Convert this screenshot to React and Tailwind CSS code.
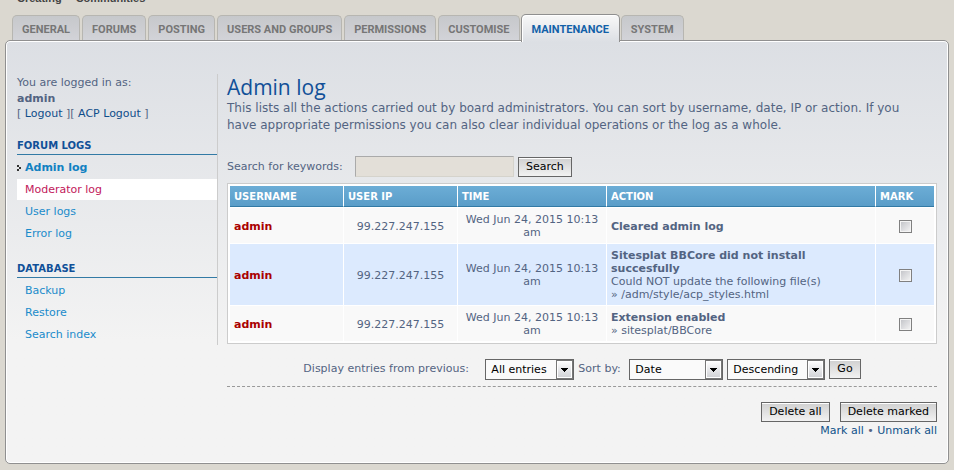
import React from 'react';

const tabs = ['General', 'Forums', 'Posting', 'Users and groups', 'Permissions', 'Customise', 'Maintenance', 'System'];

const menu = [
  { title: 'Forum logs', items: ['Admin log', 'Moderator log', 'User logs', 'Error log'] },
  { title: 'Database', items: ['Backup', 'Restore', 'Search index'] },
];

const entries = [
  { title: 'Cleared admin log', lines: [] },
  {
    title: 'Sitesplat BBCore did not install succesfully',
    lines: ['Could NOT update the following file(s)', '» /adm/style/acp_styles.html'],
  },
  { title: 'Extension enabled', lines: ['» sitesplat/BBCore'] },
];

function Tab({ label, active }) {
  return (
    <li className="flex">
      <a
        href="#tab"
        className={
          active
            ? 'relative -mx-px -mb-[2px] h-[28px] rounded-t-[5px] border border-b-0 border-[#8f8f8f] bg-linear-to-b from-[#f8f8f8] to-[#dcdfe4] px-[10px] pt-[6px] text-[#1261a8] shadow-[inset_1px_1px_0_#fff]'
            : 'h-[25px] rounded-t-[5px] border border-b-0 border-[#b7b6b1] bg-linear-to-b from-[#c6c8cb] to-[#d2d3d8] px-[9px] pt-[5px] text-[#767676]'
        }
      >
        {label}
      </a>
    </li>
  );
}

function Button({ children }) {
  return (
    <button
      type="button"
      className="h-5 border border-[#666] bg-linear-to-b from-[#d0d0d0] to-[#f2f2f2] px-[7px] text-[11px] leading-[18px] text-black shadow-[inset_0_1px_0_#fff]"
    >
      {children}
    </button>
  );
}

function Select({ label, options, width }) {
  return (
    <span className={`relative inline-block ${width}`}>
      <select
        aria-label={label}
        className="block h-[21px] w-full appearance-none border border-[#666] bg-[#fafafa] pl-[5px] text-[11px] leading-[19px] text-black"
      >
        {options.map((o) => (
          <option key={o}>{o}</option>
        ))}
      </select>
      <span className="pointer-events-none absolute top-px right-px flex h-[19px] w-[17px] items-center justify-center border border-[#777] bg-linear-to-b from-white to-[#d0d1d5] shadow-[inset_0_0_0_1px_#fff]">
        <svg width="7" height="4" viewBox="0 0 7 4" shapeRendering="crispEdges" aria-hidden="true">
          <path d="M0 0h7v1H6v1H5v1H4v1H3V3H2V2H1V1H0z" fill="#000" />
        </svg>
      </span>
    </span>
  );
}

function MenuItem({ label }) {
  const base = 'flex h-[21px] items-center ';
  if (label === 'Admin log') {
    return (
      <a href="#log" className={base + 'font-bold text-[#1181c2]'}>
        <svg className="mr-1" width="4" height="6" viewBox="0 0 4 6" shapeRendering="crispEdges" aria-hidden="true">
          <path d="M0 0h2v2H0zM2 2h2v2H2zM0 4h2v2H0z" fill="#333" />
        </svg>
        {label}
      </a>
    );
  }
  if (label === 'Moderator log') {
    return (
      <a href="#log" className={base + 'bg-white pl-2 text-[#c2185b]'}>
        {label}
      </a>
    );
  }
  return (
    <a href="#log" className={base + 'pl-2 text-[#1a8bcb]'}>
      {label}
    </a>
  );
}

export default function App() {
  return (
    <div className="bg-[#dbd8d0] pr-[5px] pb-[6px] pl-[5px] font-['Verdana','DejaVu_Sans',sans-serif] text-[11px] leading-[13px] text-[#536482]">
      <header className="flex h-[15px] flex-col justify-start overflow-hidden pl-3">
        <p className="-mt-[9px] flex gap-3.5 font-['Liberation_Sans',sans-serif] text-[11px] leading-[14px] font-bold text-[#444]">
          <span>Creating</span>
          <span>Communities</span>
        </p>
      </header>

      <nav aria-label="Sections" className="h-[25px]">
        <ul className="flex h-[25px] items-end gap-[2px] pl-[7px] font-[Roboto,sans-serif] text-[11px] leading-[17px] font-bold uppercase">
          {tabs.map((t) => (
            <Tab key={t} label={t} active={t === 'Maintenance'} />
          ))}
        </ul>
      </nav>

      <div className="flex rounded-[5px] border border-[#909090] bg-[#f3f3f3] bg-linear-to-b from-[#dcdfe4] to-[#f3f3f3] to-[300px] px-[11px] pt-[33px] pb-[26px] shadow-[inset_0_0_0_1px_#fff]">
        <aside className="w-[201px] shrink-0 self-start border-r border-[#ccc] pt-px">
          <p className="leading-4">You are logged in as:</p>
          <p className="leading-4 font-bold">admin</p>
          <p className="leading-[14px]">
            [ <a href="#logout" className="text-[#0f4d8a]">Logout</a> ][{' '}
            <a href="#acp" className="text-[#0f4d8a]">ACP Logout</a> ]
          </p>
          <div className="flex flex-col gap-[17px] pt-[17px]">
            {menu.map((group) => (
              <section key={group.title}>
                <h2 className="border-b border-[#327aa5] text-[10px] leading-4 font-bold text-[#115098] uppercase">
                  {group.title}
                </h2>
                <ul className="flex flex-col gap-px pt-[2px]">
                  {group.items.map((i) => (
                    <li key={i}>
                      <MenuItem label={i} />
                    </li>
                  ))}
                </ul>
              </section>
            ))}
          </div>
        </aside>

        <main className="min-w-0 flex-1 pl-[9px]">
          <h1 className="font-['Trebuchet_MS','Open_Sans',sans-serif] text-[21px] leading-[26px] font-medium text-[#115098]">
            Admin log
          </h1>
          <p className="pr-3 text-[12px] leading-[17px]">
            This lists all the actions carried out by board administrators. You can sort by username, date, IP or action. If
            you have appropriate permissions you can also clear individual operations or the log as a whole.
          </p>

          <div className="flex items-center pt-[22px]">
            <label htmlFor="keywords" className="w-32">Search for keywords:</label>
            <input
              id="keywords"
              type="text"
              className="mr-1 h-[21px] w-[159px] border border-[#d5d3cc] border-t-[#aaa] border-l-[#aaa] bg-[#e3dfd8]"
            />
            <Button>Search</Button>
          </div>

          <div className="mt-[6px] border border-[#ccc] bg-white p-[2px]">
            <table className="w-full table-fixed border-separate border-spacing-0">
              <colgroup>
                <col className="w-[114px]" />
                <col className="w-[114px]" />
                <col className="w-[149px]" />
                <col />
                <col className="w-[58px]" />
              </colgroup>
              <thead>
                <tr className="text-left text-[10px] text-white uppercase">
                  {['Username', 'User IP', 'Time', 'Action', 'Mark'].map((h) => (
                    <th
                      key={h}
                      className="h-[21px] border-r border-b border-r-white border-b-[#327aa5] bg-linear-to-b from-[#6cadd6] to-[#5a9dc8] pl-1 leading-[13px] last:border-r-0"
                    >
                      {h}
                    </th>
                  ))}
                </tr>
              </thead>
              <tbody className="[&_td]:border-t [&_td]:border-r [&_td]:border-white [&_td]:pt-[5px] [&_td]:pb-1 [&_td:last-child]:border-r-0">
                {entries.map((e, i) => (
                  <tr key={e.title} className={i % 2 ? 'bg-[#dceafe]' : 'bg-[#f9f9f9]'}>
                    <td className="pl-1 font-bold">
                      <a href="#user" className="text-[#aa0000]">admin</a>
                    </td>
                    <td className="text-center">99.227.247.155</td>
                    <td className="px-1 text-center">Wed Jun 24, 2015 10:13 am</td>
                    <td className="pr-12 pl-1">
                      <strong className="block">{e.title}</strong>
                      {e.lines.map((l) => (
                        <span key={l} className="block whitespace-nowrap">{l}</span>
                      ))}
                    </td>
                    <td className="text-center">
                      <input
                        type="checkbox"
                        aria-label={`Mark ${e.title}`}
                        className="inline-block size-[13px] appearance-none border border-[#808080] bg-linear-to-br from-[#c0c1c6] to-[#f6f6f6] align-middle shadow-[inset_0_0_0_1px_#f4f4f4]"
                      />
                    </td>
                  </tr>
                ))}
              </tbody>
            </table>
          </div>

          <div className="flex items-start justify-center border-b border-dashed border-[#999] pt-[15px] pb-[6px]">
            <span className="w-[182px] pt-[3px]">Display entries from previous:</span>
            <Select label="Display entries from previous" options={['All entries', '1 day', '7 days']} width="w-[89px]" />
            <span className="w-[55px] pt-[3px] pl-1">Sort by:</span>
            <div className="flex gap-1">
              <Select label="Sort by" options={['Date', 'Username', 'User IP', 'Action']} width="w-[94px]" />
              <Select label="Direction" options={['Descending', 'Ascending']} width="w-[98px]" />
              <Button>Go</Button>
            </div>
          </div>

          <div className="flex flex-col items-end pt-[15px]">
            <div className="flex gap-[10px]">
              <Button>Delete all</Button>
              <Button>Delete marked</Button>
            </div>
            <p className="pt-[2px]">
              <a href="#mark" className="text-[#105289]">Mark all</a> •{' '}
              <a href="#unmark" className="text-[#105289]">Unmark all</a>
            </p>
          </div>
        </main>
      </div>
    </div>
  );
}
